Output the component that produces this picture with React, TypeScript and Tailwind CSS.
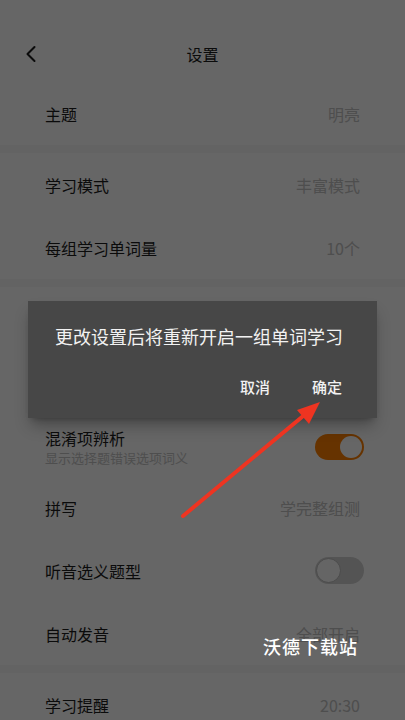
import { ChevronLeft } from 'lucide-react';

type Row = {
  label: string;
  value?: string;
  sub?: string;
  toggle?: boolean;
  h?: string;
};

const groups: Row[][] = [
  [{ label: '主题', value: '明亮' }],
  [
    { label: '学习模式', value: '丰富模式' },
    { label: '每组学习单词量', value: '10个' },
  ],
  [
    { label: '混淆项辨析', sub: '显示选择题错误选项词义', toggle: true, h: 'h-[58px]' },
    { label: '拼写', value: '学完整组测' },
    { label: '听音选义题型', toggle: false },
    { label: '自动发音', value: '全部开启' },
  ],
  [{ label: '学习提醒', value: '20:30' }],
];

function Toggle({ on }: { on: boolean }) {
  return on ? (
    <div className="-mr-[4px] w-[49px] h-[26px] rounded-full bg-[#ff7f00] flex items-center justify-end p-[2px]">
      <div className="w-[22px] h-[22px] rounded-full bg-white" />
    </div>
  ) : (
    <div className="-mr-[4px] w-[49px] h-[27px] rounded-full bg-[#d2d2d2] flex items-center p-[1px]">
      <div className="w-[25px] h-[25px] rounded-full bg-[#fcfcfc] border border-[#bcbcbc]" />
    </div>
  );
}

function SettingRow({ row }: { row: Row }) {
  return (
    <div className={`${row.h ?? 'h-[63px]'} px-[45px] flex items-center justify-between`}>
      <div className="flex flex-col">
        <span className="text-[16px] leading-[22px] text-[#1c1c1c]">{row.label}</span>
        {row.sub && <span className="text-[13px] leading-[18px] text-[#c4c4c4]">{row.sub}</span>}
      </div>
      {row.toggle !== undefined ? (
        <Toggle on={row.toggle} />
      ) : (
        <span className="text-[16px] text-[#c2c2c2]">{row.value}</span>
      )}
    </div>
  );
}

export default function App() {
  return (
    <div
      className="relative w-[405px] h-[720px] overflow-hidden bg-white"
      style={{ fontFamily: '"Noto Sans CJK SC", "Noto Sans", sans-serif' }}
    >
      {/* settings page */}
      <div className="h-[26px]" />
      <header className="h-[56px] relative flex items-center justify-center">
        <ChevronLeft className="absolute left-[17px] w-[28px] h-[28px] text-[#1c1c1c]" strokeWidth={1.75} />
        <h1 className="text-[16px] text-[#1c1c1c]">设置</h1>
      </header>
      {groups.map((g, i) => (
        <div key={i}>
          {i > 0 && <div className="h-[8px] bg-[#f7f7f7]" />}
          {/* rows behind the dialog */}
          {i === 2 && <div className="h-[131px]" />}
          {g.map((r) => (
            <SettingRow key={r.label} row={r} />
          ))}
        </div>
      ))}

      {/* dim layer */}
      <div className="absolute inset-0 bg-black/60" />

      {/* confirm dialog */}
      <div className="absolute left-[28px] top-[301px] w-[349px] h-[117px] bg-[#474747] shadow-lg shadow-black/30 pt-[23px] px-[27px]">
        <p className="text-[18px] leading-[24px] text-[#f2f2f2]">更改设置后将重新开启一组单词学习</p>
        <div className="mt-[27px] flex justify-end gap-[42px] pr-[8px] text-[15px] leading-[24px] font-medium text-[#f2f2f2]">
          <span>取消</span>
          <span>确定</span>
        </div>
      </div>

      {/* pointer arrow */}
      <svg className="absolute inset-0" width="405" height="720" viewBox="0 0 405 720">
        <line x1="183" y1="516" x2="308" y2="412" stroke="#ee3421" strokeWidth="4" strokeLinecap="round" />
        <polygon points="320,402 297,410 309,424" fill="#ee3421" />
      </svg>

      <span className="absolute left-[263px] top-[633px] text-[18px] leading-[26px] tracking-[1px] text-white font-medium">
        沃德下载站
      </span>
    </div>
  );
}
